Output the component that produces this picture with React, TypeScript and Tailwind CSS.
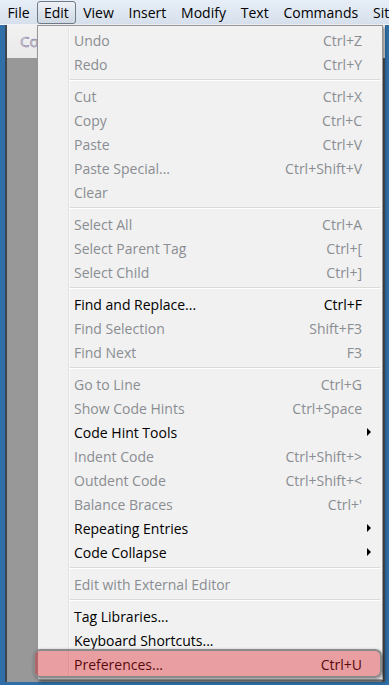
import React from "react";

type Entry =
  | { sep: true }
  | { label: string; keys?: string; off?: boolean; sub?: boolean };

const menus = ["File", "Edit", "View", "Insert", "Modify", "Text", "Commands", "Site"];

const items: Entry[] = [
  { label: "Undo", keys: "Ctrl+Z", off: true },
  { label: "Redo", keys: "Ctrl+Y", off: true },
  { sep: true },
  { label: "Cut", keys: "Ctrl+X", off: true },
  { label: "Copy", keys: "Ctrl+C", off: true },
  { label: "Paste", keys: "Ctrl+V", off: true },
  { label: "Paste Special...", keys: "Ctrl+Shift+V", off: true },
  { label: "Clear", off: true },
  { sep: true },
  { label: "Select All", keys: "Ctrl+A", off: true },
  { label: "Select Parent Tag", keys: "Ctrl+[", off: true },
  { label: "Select Child", keys: "Ctrl+]", off: true },
  { sep: true },
  { label: "Find and Replace...", keys: "Ctrl+F" },
  { label: "Find Selection", keys: "Shift+F3", off: true },
  { label: "Find Next", keys: "F3", off: true },
  { sep: true },
  { label: "Go to Line", keys: "Ctrl+G", off: true },
  { label: "Show Code Hints", keys: "Ctrl+Space", off: true },
  { label: "Code Hint Tools", sub: true },
  { label: "Indent Code", keys: "Ctrl+Shift+>", off: true },
  { label: "Outdent Code", keys: "Ctrl+Shift+<", off: true },
  { label: "Balance Braces", keys: "Ctrl+'", off: true },
  { label: "Repeating Entries", sub: true },
  { label: "Code Collapse", sub: true },
  { sep: true },
  { label: "Edit with External Editor", off: true },
  { sep: true },
  { label: "Tag Libraries..." },
  { label: "Keyboard Shortcuts..." },
  { label: "Preferences...", keys: "Ctrl+U" },
];

const App = () => {
  return (
    <div
      className="relative w-[389px] h-[685px] overflow-hidden bg-[#2f6ea6] flex flex-col text-[14px] text-black"
      style={{ fontFamily: '"Open Sans", "Noto Sans", sans-serif' }}
    >
      {/* menu bar */}
      <div className="h-[25px] shrink-0 flex items-center bg-gradient-to-b from-[#e7eef7] to-[#d6e0ec] border-b border-[#eef2f7] whitespace-nowrap">
        {menus.map((m) =>
          m === "Edit" ? (
            <div
              key={m}
              className="h-[23px] leading-[21px] px-[6px] rounded-[3px] border border-[#707b88] bg-gradient-to-b from-[#eef2f7] to-[#cfd8e3]"
            >
              {m}
            </div>
          ) : (
            <div key={m} className="h-[23px] leading-[23px] px-[7.4px]">
              {m}
            </div>
          )
        )}
      </div>

      {/* window body */}
      <div className="flex-1 flex pl-[5px] pr-[4px] pb-[3px]">
        <div className="flex-1 flex flex-col border-l-2 border-[#3d4650]">
          <div className="h-[33px] shrink-0 bg-gradient-to-b from-[#f2f2f2] to-[#e9e9e9] flex items-center pl-[13px]">
            <span className="text-transparent [-webkit-text-stroke:0.45px_#6a5a8a] text-[15px]">Co</span>
          </div>
          <div className="flex-1 bg-[#989898] flex justify-end">
            <div className="w-[3px] bg-[#555b62]" />
          </div>
        </div>
      </div>

      {/* dropdown */}
      <div className="absolute left-[37px] top-[25px] w-[346px] h-[655px] bg-[#f1f1f1] border border-[#979797] p-[2px] shadow-[2px_2px_3px_rgba(0,0,0,0.4)]">
        <div className="absolute left-[30px] top-[2px] bottom-[2px] w-[2px] border-l border-[#e0e1e1] bg-white/70" />
        {items.map((it, i) =>
          "sep" in it ? (
            <div key={i} className="h-2 flex items-center pl-[29px]">
              <div className="flex-1 h-[2px] border-t border-[#dadada] border-b border-b-white" />
            </div>
          ) : (
            <div
              key={i}
              className={`relative h-6 flex items-center pl-[34px] pr-[18px] whitespace-nowrap ${
                it.off ? "text-[#8a8d91]" : "text-black"
              }`}
            >
              <span className="flex-1">{it.label}</span>
              {it.keys && <span>{it.keys}</span>}
              {it.sub && (
                <span className="absolute right-[9px] top-[8px] w-0 h-0 border-y-[4px] border-y-transparent border-l-[4px] border-l-black" />
              )}
            </div>
          )
        )}
      </div>

      {/* highlight drawn over Preferences */}
      <div className="absolute left-[33px] top-[649px] w-[349px] h-[29px] rounded-[7px] border-2 border-[#8a8a8a] bg-[rgba(222,25,35,0.38)] shadow-[1px_1px_3px_rgba(0,0,0,0.45)]" />
    </div>
  );
};

export default App;
